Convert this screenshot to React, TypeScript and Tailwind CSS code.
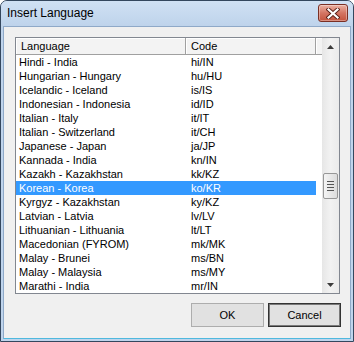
const languages: [string, string][] = [
  ["Hindi - India", "hi/IN"],
  ["Hungarian - Hungary", "hu/HU"],
  ["Icelandic - Iceland", "is/IS"],
  ["Indonesian - Indonesia", "id/ID"],
  ["Italian - Italy", "it/IT"],
  ["Italian - Switzerland", "it/CH"],
  ["Japanese - Japan", "ja/JP"],
  ["Kannada - India", "kn/IN"],
  ["Kazakh - Kazakhstan", "kk/KZ"],
  ["Korean - Korea", "ko/KR"],
  ["Kyrgyz - Kazakhstan", "ky/KZ"],
  ["Latvian - Latvia", "lv/LV"],
  ["Lithuanian - Lithuania", "lt/LT"],
  ["Macedonian (FYROM)", "mk/MK"],
  ["Malay - Brunei", "ms/BN"],
  ["Malay - Malaysia", "ms/MY"],
  ["Marathi - India", "mr/IN"],
];

const selected = "ko/KR";

function CloseButton() {
  return (
    <button className="flex h-[18px] w-[30px] items-center justify-center rounded-[3px] border border-[#7a2f24] bg-gradient-to-b from-[#eab1a3] via-[#d47563] to-[#c4533d] shadow-[inset_0_0_0_1px_rgba(255,255,255,0.35)]">
      <svg width="14" height="11" viewBox="0 0 14 11">
        <path d="M2.5 1.5 L11.5 9.5 M11.5 1.5 L2.5 9.5" stroke="#5a2119" strokeWidth="4" strokeLinecap="square" />
        <path d="M2.5 1.5 L11.5 9.5 M11.5 1.5 L2.5 9.5" stroke="#ffffff" strokeWidth="2.2" strokeLinecap="square" />
      </svg>
    </button>
  );
}

function HeaderCell({ label, className }: { label: string; className: string }) {
  return (
    <div
      className={`flex h-full items-center border-b border-r border-b-[#a0a0a0] border-r-[#a0a0a0] pl-[5px] shadow-[inset_1px_1px_0_#ffffff] ${className}`}
    >
      {label}
    </div>
  );
}

function Arrow({ down }: { down?: boolean }) {
  return (
    <div className="flex h-[17px] items-center justify-center">
      <svg width="7" height="4" viewBox="0 0 7 4" className={down ? "rotate-180" : ""}>
        <path d="M3.5 0 L7 4 L0 4 Z" fill="#3c3c3c" />
      </svg>
    </div>
  );
}

function ScrollBar() {
  return (
    <div className="flex w-[17px] flex-col bg-gradient-to-r from-[#e6e6e6] via-[#f2f2f2] to-[#ebebeb]">
      <Arrow />
      <div className="flex-1 px-[1px]">
        <div className="mt-[118px] flex h-[26px] flex-col items-center justify-center gap-[2px] rounded-[2px] border border-[#979797] bg-gradient-to-r from-[#f4f4f4] to-[#dcdcdc]">
          <div className="h-px w-[7px] bg-[#555555]" />
          <div className="h-px w-[7px] bg-[#555555]" />
          <div className="h-px w-[7px] bg-[#555555]" />
          <div className="h-px w-[7px] bg-[#555555]" />
        </div>
      </div>
      <Arrow down />
    </div>
  );
}

function DialogButton({ children, focused }: { children: string; focused?: boolean }) {
  return (
    <button
      className={
        focused
          ? "h-[24px] w-[73px] border border-[#333333] bg-[#e1e1e1] shadow-[inset_0_0_0_1px_#7a7a7a]"
          : "h-[24px] w-[73px] border border-[#adadad] bg-[#e1e1e1]"
      }
    >
      {children}
    </button>
  );
}

export default function App() {
  return (
    <div className="flex h-[342px] w-[354px] flex-col overflow-hidden rounded-t-[7px] border border-[#34475e] bg-[#bfd4ec] font-['Liberation_Sans',Arial,sans-serif] text-[11px] text-black">
      <div className="flex h-[25px] shrink-0 items-start justify-between bg-gradient-to-b from-[#d0e1f4] to-[#bed3eb] pl-[6px] pr-[5px]">
        <span className="pt-[4px] text-[12px] leading-[17px]">Insert Language</span>
        <div className="pt-[3px]">
          <CloseButton />
        </div>
      </div>

      <div className="mx-[2px] mb-[2px] flex flex-1 flex-col border border-[#8fa9c8] border-b-[#4fb9de] bg-[#f0f0f0] pl-[11px] pr-[10px] pt-[10px]">
        <div className="flex h-[257px] w-[325px] border border-[#828790] bg-white">
          <div className="flex w-[306px] flex-col">
            <div className="flex h-[17px] shrink-0 bg-[#f3f3f3]">
              <HeaderCell label="Language" className="w-[170px]" />
              <HeaderCell label="Code" className="w-[130px]" />
              <div className="flex-1 border-b border-b-[#a0a0a0] shadow-[inset_1px_1px_0_#ffffff]" />
            </div>
            {languages.map(([name, code]) => (
              <div
                key={code + name}
                className={
                  code === selected
                    ? "flex h-[14px] w-[300px] items-center bg-[#3399ff] text-white"
                    : "flex h-[14px] w-[300px] items-center"
                }
              >
                <span className="w-[170px] pl-[3px] leading-[14px]">{name}</span>
                <span className="w-[130px] pl-[5px] leading-[14px]">{code}</span>
              </div>
            ))}
          </div>
          <ScrollBar />
        </div>

        <div className="-mr-[1px] mt-[9px] flex justify-end gap-[4px]">
          <DialogButton>OK</DialogButton>
          <DialogButton focused>Cancel</DialogButton>
        </div>
      </div>
    </div>
  );
}
